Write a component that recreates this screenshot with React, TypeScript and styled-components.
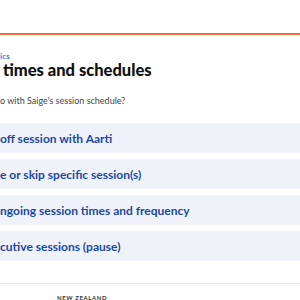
import React from "react";
import styled, { createGlobalStyle } from "styled-components";

const Global = createGlobalStyle`
  html, body { margin: 0; padding: 0; background: #ffffff; }
  body { overflow: hidden; font-family: Lato, "Open Sans", Arial, sans-serif; }
`;

const Page = styled.div`
  width: 300px;
  height: 300px;
  overflow: hidden;
  display: flex;
  flex-direction: column;
`;

const TopBar = styled.header`
  height: 33px;
  flex: none;
  border-bottom: 2px solid #ff6a3a;
`;

const Main = styled.main`
  display: flex;
  flex-direction: column;
`;

const Crumb = styled.div`
  margin-top: 17px;
  font-size: 8px;
  line-height: 8px;
  font-weight: 700;
  letter-spacing: 0.2px;
  color: #3d7be0;
`;

const Title = styled.h1`
  margin: 0;
  padding-left: 3px;
  font-size: 16.5px;
  line-height: 20px;
  font-weight: 900;
  color: #111111;
`;

const Question = styled.p`
  margin: 15px 0 0;
  font-size: 9px;
  line-height: 12px;
  color: #444444;
`;

const List = styled.div`
  margin-top: 16px;
  display: flex;
  flex-direction: column;
  gap: 6px;
`;

const Option = styled.button`
  all: unset;
  box-sizing: border-box;
  height: 30px;
  width: 100%;
  display: flex;
  align-items: center;
  background: #eff3f9;
  font-family: Lato, "Open Sans", Arial, sans-serif;
  font-size: 12px;
  font-weight: 700;
  color: #1a48a6;
  white-space: nowrap;
`;

const Footer = styled.footer`
  margin-top: 22px;
  border-top: 1px solid #e6e6e6;
  padding-left: 57px;
`;

const Region = styled.div`
  margin-top: 10px;
  font-size: 6px;
  line-height: 7px;
  font-weight: 700;
  letter-spacing: 0.6px;
  color: #333333;
`;

const options = [
  "off session with Aarti",
  "e or skip specific session(s)",
  "ngoing session times and frequency",
  "cutive sessions (pause)",
];

export default function App() {
  return (
    <Page>
      <Global />
      <TopBar />
      <Main>
        <Crumb>ics</Crumb>
        <Title>times and schedules</Title>
        <Question>o with Saige's session schedule?</Question>
        <List>
          {options.map((o) => (
            <Option key={o}>{o}</Option>
          ))}
        </List>
      </Main>
      <Footer>
        <Region>NEW ZEALAND</Region>
      </Footer>
    </Page>
  );
}
